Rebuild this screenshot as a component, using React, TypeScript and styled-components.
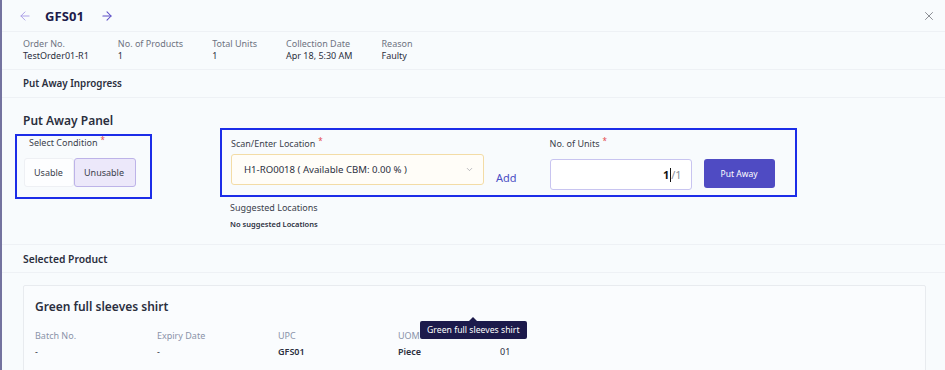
import React from 'react'
import styled, { createGlobalStyle } from 'styled-components'
import { ArrowLeft, ArrowRight, X, ChevronDown } from 'lucide-react'

const GlobalStyle = createGlobalStyle`
  html, body {
    margin: 0;
    padding: 0;
    background: #f8fbfd;
    font-family: "Noto Sans", "Open Sans", sans-serif;
    color: #2b2f3e;
  }
  * { box-sizing: border-box; }
`

const Page = styled.div`
  width: 945px;
  height: 370px;
  overflow: hidden;
  border-left: 2px solid #74739f;
  background: #f8fbfd;
`

const Header = styled.div`
  height: 32px;
  display: flex;
  align-items: center;
  padding: 0 9px 0 16px;
  border-bottom: 1px solid #eef1f5;
`

const NavIcon = styled.span<{ $color: string }>`
  display: flex;
  color: ${(p) => p.$color};
`

const Title = styled.h1`
  margin: 0 16px 0 13px;
  font-size: 13px;
  font-weight: 700;
  color: #1d1b4b;
  letter-spacing: 0.1px;
`

const Close = styled.span`
  margin-left: auto;
  display: flex;
  color: #7d7f86;
`

const Meta = styled.div`
  height: 38px;
  display: flex;
  gap: 29px;
  padding: 6px 0 0 21px;
  border-bottom: 1px solid #eef1f5;
`

const MetaItem = styled.div`
  display: flex;
  flex-direction: column;
  font-size: 9px;
  line-height: 12px;
`

const MetaLabel = styled.span`
  color: #6e7381;
`

const MetaValue = styled.span`
  color: #2b2f3e;
`

const SectionBar = styled.div<{ $size?: number }>`
  height: 28px;
  display: flex;
  align-items: center;
  padding-left: 21px;
  font-size: ${(p) => p.$size || 9.8}px;
  font-weight: 600;
  color: #2b2f3e;
  border-bottom: 1px solid #eef1f5;
`

const Panel = styled.div`
  height: 147px;
  padding: 16px 0 0 13px;
  border-bottom: 1px solid #eef1f5;
`

const PanelTitle = styled.h2`
  margin: 0 0 0 8px;
  font-size: 12px;
  line-height: 14px;
  font-weight: 600;
  color: #2b2f3e;
`

const PanelRow = styled.div`
  display: flex;
  align-items: flex-start;
  gap: 68px;
`

const Highlight = styled.div<{ $top?: number }>`
  border: 2px solid #1c2de8;
  margin-top: ${(p) => p.$top || 0}px;
`

const ConditionBox = styled(Highlight)`
  width: 137px;
  height: 65px;
  padding: 1px 0 0 7px;
`

const FieldLabel = styled.div<{ $indent?: number }>`
  height: 12px;
  font-size: 9px;
  line-height: 12px;
  color: #3b3f4c;
  padding-left: ${(p) => p.$indent || 0}px;
`

const Req = styled.sup`
  color: #e5484d;
  font-size: 8px;
  margin-left: 3px;
  vertical-align: 3px;
  line-height: 0;
`

const Toggle = styled.div`
  display: flex;
  margin-top: 9px;
`

const ToggleOption = styled.div<{ $active?: boolean }>`
  height: 29px;
  display: flex;
  align-items: center;
  padding: 0 9px;
  font-size: 9px;
  color: #3b3f4c;
  background: ${(p) => (p.$active ? '#ece8fa' : '#fdfeff')};
  border: 1px solid ${(p) => (p.$active ? '#bdb3e8' : '#eef0f4')};
  border-radius: 3px;
  width: ${(p) => (p.$active ? 62 : 50)}px;
`

const LocationColumn = styled.div`
  display: flex;
  flex-direction: column;
`

const LocationBox = styled(Highlight)`
  width: 577px;
  height: 69px;
  display: flex;
  align-items: flex-start;
  padding: 8px 0 0 9px;
`

const Field = styled.div`
  display: flex;
  flex-direction: column;
`

const Select = styled.div`
  width: 253px;
  height: 31px;
  margin-top: 4px;
  display: flex;
  align-items: center;
  justify-content: space-between;
  padding: 0 9px 0 12px;
  border: 1px solid #f3dca6;
  border-radius: 3px;
  background: #fffdf8;
  font-size: 9.6px;
  color: #2b2f3e;
  svg { color: #8e9098; }
`

const AddLink = styled.span`
  margin: 32px 0 0 12px;
  font-size: 11px;
  color: #4b4ec4;
`

const UnitsField = styled(Field)`
  margin-left: 33px;
`

const UnitsRow = styled.div`
  display: flex;
  align-items: flex-start;
  gap: 12px;
  margin-top: 9px;
`

const UnitsInput = styled.div`
  width: 142px;
  height: 31px;
  display: flex;
  align-items: center;
  justify-content: flex-end;
  padding-right: 9px;
  border: 1px solid #c8c4f0;
  border-radius: 3px;
  background: #ffffff;
  font-size: 11px;
`

const UnitsValue = styled.span`
  font-weight: 700;
  color: #111;
  border-right: 1px solid #111;
  padding-right: 1px;
  line-height: 14px;
`

const UnitsTotal = styled.span`
  color: #8b8e98;
`

const PrimaryButton = styled.button`
  width: 71px;
  height: 29px;
  border: none;
  border-radius: 3px;
  background: #4f4bc3;
  color: #fff;
  font-family: inherit;
  font-size: 8.5px;
`

const Suggestions = styled.div`
  padding-left: 10px;
  margin-top: 5px;
`

const SuggestTitle = styled.div`
  font-size: 9px;
  line-height: 12px;
  color: #3b3f4c;
`

const SuggestEmpty = styled.div`
  margin-top: 5px;
  font-size: 7.5px;
  line-height: 10px;
  font-weight: 600;
  color: #2b2f3e;
`

const Card = styled.div`
  position: relative;
  margin: 12px 19px 0 21px;
  height: 120px;
  border: 1px solid #e8ebef;
  border-radius: 2px;
  background: #fafcfe;
  padding: 13px 0 0 11px;
`

const CardTitle = styled.h3`
  margin: 0;
  font-size: 12px;
  line-height: 16px;
  font-weight: 600;
  color: #2b2f3e;
`

const DetailRow = styled.div`
  display: flex;
  margin-top: 13px;
`

const Detail = styled.div<{ $w: number }>`
  width: ${(p) => p.$w}px;
  display: flex;
  flex-direction: column;
  font-size: 9px;
  line-height: 16px;
`

const DetailLabel = styled.span`
  height: 16px;
  color: #8a93a9;
`

const DetailValue = styled.span<{ $bold?: boolean }>`
  font-weight: ${(p) => (p.$bold ? 600 : 400)};
  color: #2b2f3e;
`

const Tooltip = styled.div`
  position: absolute;
  left: 396px;
  top: 35px;
  height: 18px;
  padding: 0 7px 0 7px;
  display: flex;
  align-items: center;
  background: #1c1a4b;
  color: #fff;
  font-size: 8.7px;
  border-radius: 2px;
  white-space: nowrap;
  &::before {
    content: '';
    position: absolute;
    left: 49px;
    top: -4px;
    border-left: 4px solid transparent;
    border-right: 4px solid transparent;
    border-bottom: 4px solid #1c1a4b;
  }
`

const meta = [
  { label: 'Order No.', value: 'TestOrder01-R1' },
  { label: 'No. of Products', value: '1' },
  { label: 'Total Units', value: '1' },
  { label: 'Collection Date', value: 'Apr 18, 5:30 AM' },
  { label: 'Reason', value: 'Faulty' },
]

// last column's label sits under the tooltip in the screenshot
const details = [
  { label: 'Batch No.', value: '-', w: 122 },
  { label: 'Expiry Date', value: '-', w: 121 },
  { label: 'UPC', value: 'GFS01', w: 120, bold: true },
  { label: 'UOM', value: 'Piece', w: 102, bold: true },
  { label: '', value: '01', w: 60 },
]

const App: React.FC = () => {
  return (
    <>
      <GlobalStyle />
      <Page>
        <Header>
          <NavIcon $color="#a99ce6">
            <ArrowLeft size={14} strokeWidth={1.6} />
          </NavIcon>
          <Title>GFS01</Title>
          <NavIcon $color="#5b4dc6">
            <ArrowRight size={14} strokeWidth={1.8} />
          </NavIcon>
          <Close>
            <X size={14} strokeWidth={1.5} />
          </Close>
        </Header>

        <Meta>
          {meta.map((m) => (
            <MetaItem key={m.label}>
              <MetaLabel>{m.label}</MetaLabel>
              <MetaValue>{m.value}</MetaValue>
            </MetaItem>
          ))}
        </Meta>

        <SectionBar>Put Away Inprogress</SectionBar>

        <Panel>
          <PanelTitle>Put Away Panel</PanelTitle>
          <PanelRow>
            <ConditionBox $top={6}>
              <FieldLabel $indent={5}>
                Select Condition<Req>*</Req>
              </FieldLabel>
              <Toggle>
                <ToggleOption>Usable</ToggleOption>
                <ToggleOption $active>Unusable</ToggleOption>
              </Toggle>
            </ConditionBox>

            <LocationColumn>
              <LocationBox>
                <Field>
                  <FieldLabel>
                    Scan/Enter Location<Req>*</Req>
                  </FieldLabel>
                  <Select>
                    <span>H1-RO0018 ( Available CBM: 0.00 % )</span>
                    <ChevronDown size={9} strokeWidth={1.6} />
                  </Select>
                </Field>
                <AddLink>Add</AddLink>
                <UnitsField>
                  <FieldLabel>
                    No. of Units<Req>*</Req>
                  </FieldLabel>
                  <UnitsRow>
                    <UnitsInput>
                      <UnitsValue>1</UnitsValue>
                      <UnitsTotal>/1</UnitsTotal>
                    </UnitsInput>
                    <PrimaryButton>Put Away</PrimaryButton>
                  </UnitsRow>
                </UnitsField>
              </LocationBox>
              <Suggestions>
                <SuggestTitle>Suggested Locations</SuggestTitle>
                <SuggestEmpty>No suggested Locations</SuggestEmpty>
              </Suggestions>
            </LocationColumn>
          </PanelRow>
        </Panel>

        <SectionBar $size={10.3}>Selected Product</SectionBar>

        <Card>
          <CardTitle>Green full sleeves shirt</CardTitle>
          <DetailRow>
            {details.map((d, i) => (
              <Detail key={i} $w={d.w}>
                <DetailLabel>{d.label}</DetailLabel>
                <DetailValue $bold={d.bold}>{d.value}</DetailValue>
              </Detail>
            ))}
          </DetailRow>
          <Tooltip>Green full sleeves shirt</Tooltip>
        </Card>
      </Page>
    </>
  )
}

export default App
